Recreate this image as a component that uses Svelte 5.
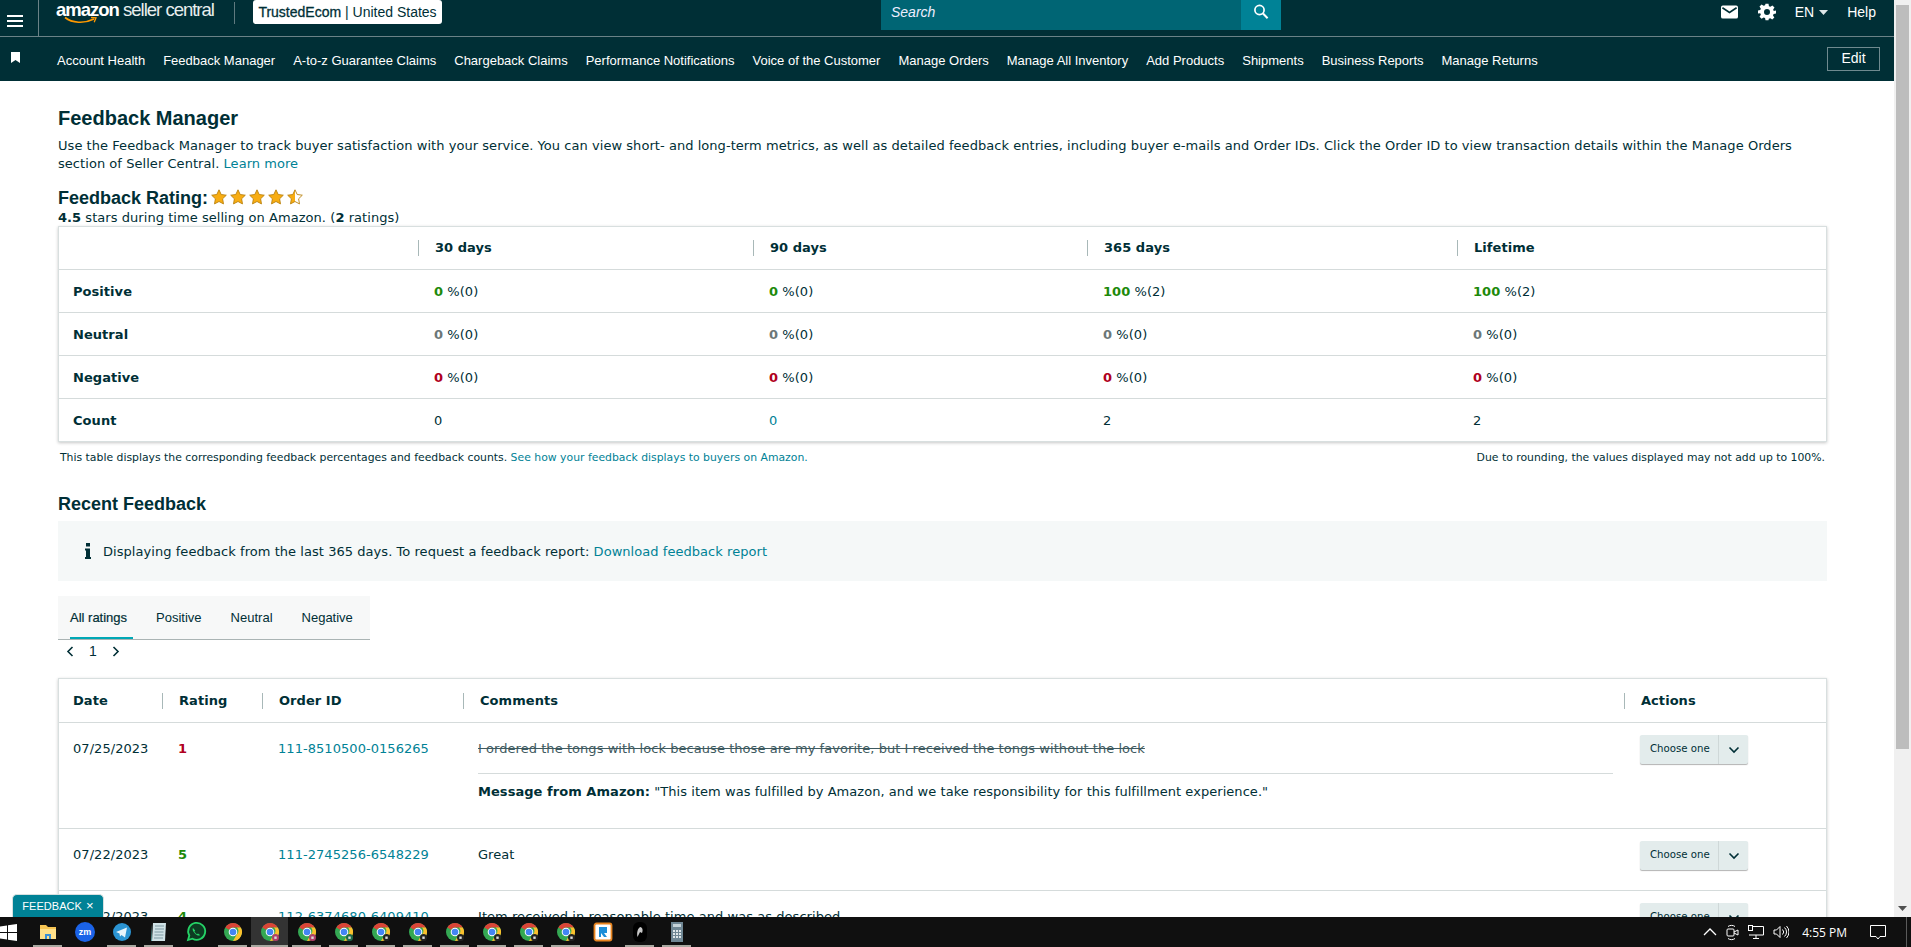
<script>
  const navItems = ['Account Health','Feedback Manager','A-to-z Guarantee Claims','Chargeback Claims','Performance Notifications','Voice of the Customer','Manage Orders','Manage All Inventory','Add Products','Shipments','Business Reports','Manage Returns'];
  const summary = [
    { label: 'Positive', cls: 'green', cells: [['0','(0)'],['0','(0)'],['100','(2)'],['100','(2)']] },
    { label: 'Neutral', cls: 'grey', cells: [['0','(0)'],['0','(0)'],['0','(0)'],['0','(0)']] },
    { label: 'Negative', cls: 'red', cells: [['0','(0)'],['0','(0)'],['0','(0)'],['0','(0)']] }
  ];
  const rows = [
    { date: '07/25/2023', rating: '1', cls: 'red', id: '111-8510500-0156265', comment: 'I ordered the tongs with lock because those are my favorite, but I received the tongs without the lock', struck: true },
    { date: '07/22/2023', rating: '5', cls: 'green', id: '111-2745256-6548229', comment: 'Great' },
    { date: '07/22/2023', rating: '4', cls: 'green', id: '112-6374680-6409410', comment: 'Item received in reasonable time and was as described' }
  ];
  const star = 'M8 .8l2.2 4.7 5.1.7-3.7 3.6.9 5.1L8 12.5l-4.5 2.4.9-5.1L.7 6.2l5.1-.7z';
  const apps = [
    { k: 'folder', on: true }, { k: 'zoom' }, { k: 'telegram', on: true }, { k: 'notepad', on: true }, { k: 'whatsapp' },
    { k: 'chrome', on: true }, { k: 'chrome', on: true, active: true, badge: '#b0406a' }, { k: 'chrome', on: true, badge: '#b0406a' },
    { k: 'chrome', on: true, badge: '#1d6b4a' }, { k: 'chrome', on: true, badge: '#222' }, { k: 'chrome', on: true, badge: '#222' },
    { k: 'chrome', on: true, badge: '#222' }, { k: 'chrome', on: true, badge: '#222' }, { k: 'chrome', on: true, badge: '#222' }, { k: 'chrome', on: true, badge: '#222' },
    { k: 'r' }, { k: 'dark', on: true }, { k: 'calc', on: true }
  ];
</script>

<div class="screen">
  <div class="upper">
    <div class="page">
      <header class="topbar">
        <button class="burger" aria-label="Menu">
          <svg width="16" height="12" viewBox="0 0 16 12"><path d="M0 1h16M0 6h16M0 11h16" stroke="#fff" stroke-width="2"/></svg>
        </button>
        <div class="logo">
          <span class="logo-text"><b>amazon</b> seller central</span>
          <svg class="smile" width="36" height="9" viewBox="0 0 36 9"><path d="M1 1.500C8 7 20 8 30 3" fill="none" stroke="#f90" stroke-width="1.600"/><path d="M27 1.500l5 .3-1.800 4.400" fill="none" stroke="#f90" stroke-width="1.300"/></svg>
        </div>
        <span class="vr"></span>
        <div class="chip"><span class="chip-strong">TrustedEcom</span> | United States</div>
        <div class="search">
          <span class="search-input">Search</span>
          <span class="search-btn">
            <svg width="18" height="18" viewBox="0 0 18 18"><circle cx="7.500" cy="7" r="4.600" fill="none" stroke="#fff" stroke-width="1.700"/><path d="M11 10.500l4.600 4.800" stroke="#fff" stroke-width="2"/></svg>
          </span>
        </div>
        <div class="top-right">
          <svg class="mail" width="17" height="14" viewBox="0 0 18 14"><rect width="18" height="14" rx="2" fill="#fff"/><path d="M1.500 2.500L9 7.500l7.500-5" fill="none" stroke="#002f36" stroke-width="1.700"/></svg>
          <svg class="gear" width="18" height="18" viewBox="0 0 24 24"><path fill="#fff" fill-rule="evenodd" d="M10 1h4l.6 3.200 1.900.8 2.700-1.800 2.800 2.800-1.800 2.700.8 1.900L24 10v4l-3.200.6-.8 1.900 1.800 2.700-2.800 2.800-2.700-1.800-1.900.8L14 23h-4l-.6-3-1.900-.8-2.700 1.800-2.800-2.800 1.800-2.700-.8-1.900L0 14v-4l3-.6.8-1.900L2 4.800 4.800 2l2.700 1.800 1.900-.8zM12 8a4 4 0 1 0 0 8 4 4 0 0 0 0-8z"/></svg>
          <span class="lang">EN</span>
          <svg class="caret" width="9" height="5" viewBox="0 0 9 5"><path d="M0 0h9L4.500 5z" fill="#dfe7e8"/></svg>
          <span class="help">Help</span>
        </div>
      </header>

      <nav class="navbar">
        <svg class="bookmark" width="9" height="11" viewBox="0 0 9 11"><path d="M0 0h9v11L4.500 8 0 11z" fill="#fff"/></svg>
        <div class="nav-items">
          {#each navItems as n}<span>{n}</span>{/each}
        </div>
        <button class="edit">Edit</button>
      </nav>

      <main class="content">
        <h1>Feedback Manager</h1>
        <p class="intro">Use the Feedback Manager to track buyer satisfaction with your service. You can view short- and long-term metrics, as well as detailed feedback entries, including buyer e-mails and Order IDs. Click the Order ID to view transaction details within the Manage Orders section of Seller Central. <a href="#a">Learn more</a></p>

        <div class="rating-title">
          <h2>Feedback Rating:</h2>
          <svg class="stars" width="96" height="18" viewBox="0 0 96 18">
            <defs><linearGradient id="half"><stop offset="50%" stop-color="#f8ad12"/><stop offset="50%" stop-color="#fff"/></linearGradient></defs>
            {#each [0,1,2,3] as i}
              <path d={star} transform="translate({i*19},1)" fill="#f8ad12" stroke="#b9810f" stroke-width=".9"/>
            {/each}
            <path d={star} transform="translate(76,1)" fill="url(#half)" stroke="#b9810f" stroke-width=".9"/>
          </svg>
        </div>
        <p class="sub"><b>4.5</b> stars during time selling on Amazon. (<b>2</b> ratings)</p>

        <div class="card summary">
          <div class="row head">
            <div></div>
            <div class="th">30 days</div><div class="th">90 days</div><div class="th">365 days</div><div class="th">Lifetime</div>
          </div>
          {#each summary as s}
            <div class="row">
              <div class="label">{s.label}</div>
              {#each s.cells as c}
                <div class="cell"><b class={s.cls}>{c[0]}</b> %{c[1]}</div>
              {/each}
            </div>
          {/each}
          <div class="row">
            <div class="label">Count</div>
            <div class="cell">0</div><div class="cell link">0</div><div class="cell">2</div><div class="cell">2</div>
          </div>
        </div>
        <div class="notes">
          <span>This table displays the corresponding feedback percentages and feedback counts. <a href="#a">See how your feedback displays to buyers on Amazon.</a></span>
          <span>Due to rounding, the values displayed may not add up to 100%.</span>
        </div>

        <h3>Recent Feedback</h3>
        <div class="info">
          <svg width="6" height="16" viewBox="0 0 6 16"><rect x="1" y="0" width="4" height="3.500" fill="#002f36"/><path d="M0 5.500h5V14h1v2H0v-2h1V7.500H0z" fill="#002f36"/></svg>
          <span>Displaying feedback from the last 365 days. To request a feedback report: <a href="#a">Download feedback report</a></span>
        </div>

        <div class="tabs">
          <span class="tab active">All ratings</span><span class="tab">Positive</span><span class="tab">Neutral</span><span class="tab">Negative</span>
        </div>
        <div class="pager">
          <svg width="8" height="11" viewBox="0 0 8 11"><path d="M6.500 1L2 5.500 6.500 10" fill="none" stroke="#002f36" stroke-width="1.600"/></svg>
          <span>1</span>
          <svg width="8" height="11" viewBox="0 0 8 11"><path d="M1.500 1L6 5.500 1.500 10" fill="none" stroke="#002f36" stroke-width="1.600"/></svg>
        </div>

        <div class="card feed">
          <div class="frow head">
            <div class="fh first">Date</div><div class="fh">Rating</div><div class="fh">Order ID</div><div class="fh">Comments</div><div class="fh">Actions</div>
          </div>
          {#each rows as r}
            <div class="frow item">
              <div class="first">{r.date}</div>
              <div><b class={r.cls}>{r.rating}</b></div>
              <div><a href="#a">{r.id}</a></div>
              <div class="comment">
                <div class:struck={r.struck}>{r.comment}</div>
                {#if r.struck}
                  <div class="msg"><b>Message from Amazon:</b> "This item was fulfilled by Amazon, and we take responsibility for this fulfillment experience."</div>
                {/if}
              </div>
              <div>
                <div class="choose">
                  <span class="choose-label">Choose one</span>
                  <span class="choose-arrow"><svg width="12" height="8" viewBox="0 0 12 8"><path d="M1.500 1.500L6 6l4.500-4.500" fill="none" stroke="#002f36" stroke-width="1.600"/></svg></span>
                </div>
              </div>
            </div>
          {/each}
        </div>
      </main>
    </div>

    <div class="scrollbar">
      <div class="thumb"></div>
      <svg class="down" width="9" height="5" viewBox="0 0 9 5"><path d="M0 0h9L4.500 5z" fill="#505050"/></svg>
    </div>

    <div class="feedback-tab">FEEDBACK <span>×</span></div>
  </div>

  <footer class="taskbar">
    <svg class="win" width="17" height="17" viewBox="0 0 17 17"><path fill="#fff" d="M0 2.400l7-1v6.600H0zM8 1.300L17 0v8H8zM0 9h7v6.600l-7-1zM8 9h9v8l-9-1.300z"/></svg>
    <div class="apps">
      {#each apps as a}
        <div class="app" class:active={a.active}>
          <svg width="22" height="22" viewBox="0 0 22 22">
            {#if a.k === 'folder'}
              <path d="M3 4h6l2 2h8v12H3z" fill="#f6c453"/><path d="M3 8h16v10H3z" fill="#ffe08a"/><path d="M8 13h6v5h-2v-3h-2v3H8z" fill="#3b8fd6"/>
            {:else if a.k === 'zoom'}
              <circle cx="11" cy="11" r="10" fill="#1b63e8"/><text x="11" y="14" text-anchor="middle" class="zm">zm</text>
            {:else if a.k === 'telegram'}
              <circle cx="11" cy="11" r="9" fill="#2b94d3"/><path d="M5 11l11-4.500-2 10-3.500-2.500-1.500 1.500-.5-3z" fill="#e8f4fb"/>
            {:else if a.k === 'notepad'}
              <path d="M5 2h13l-1 18H4z" fill="#cfe2e6"/><path d="M7 5h9M7 8h9M6.500 11h9M6.500 14h9M6 17h9" stroke="#7f9aa3" stroke-width="1"/><path d="M4 3L3 20h1z" fill="#5fa6a6"/>
            {:else if a.k === 'whatsapp'}
              <path d="M3 19l1.300-4.500a8.500 8.500 0 1 1 3.200 3.200z" fill="#0d3b22" stroke="#25d366" stroke-width="1.800"/><path d="M8 7c-1 1 0 3.500 2 5.500s4 2.700 5 1.500l-2-1.500-1 .7c-1-.5-2-1.500-2.600-2.600l.8-1z" fill="#25d366"/>
            {:else if a.k === 'chrome'}
              <circle cx="11" cy="11" r="9" fill="#34a853"/>
              <path d="M11 2a9 9 0 0 1 7.800 4.500H11a4.500 4.500 0 0 0-3.900 2.300L3.300 6.500A9 9 0 0 1 11 2z" fill="#db4437"/>
              <path d="M18.800 6.500A9 9 0 0 1 11 20l3.900-6.700a4.500 4.500 0 0 0 0-6.800z" fill="#fbc02d"/>
              <circle cx="11" cy="11" r="4.300" fill="#fff"/><circle cx="11" cy="11" r="3.300" fill="#4285f4"/>
              {#if a.badge}<circle cx="16.500" cy="16.500" r="3.500" fill={a.badge}/><rect x="15.300" y="15.500" width="2.400" height="2.400" fill="#ddd"/>{/if}
            {:else if a.k === 'r'}
              <rect x="2.500" y="2.500" width="17" height="17" rx="2" fill="#fff" stroke="#e8841f" stroke-width="1.800"/><path d="M7 6h8v6h-3l3 4h-3l-3-4v4H7z" fill="#1d8ed8"/>
            {:else if a.k === 'dark'}
              <rect x="4" y="1" width="14" height="20" rx="6" fill="#000"/><path d="M8.500 16c-1-4 0-9 3-10 2.500 1 2.500 4 1.500 6l-2-1z" fill="#c8c8c8"/>
            {:else if a.k === 'calc'}
              <rect x="5" y="1" width="12" height="20" fill="#6f8794"/><rect x="7" y="3" width="8" height="3" fill="#c5d3d9"/><path d="M7 9h2v2H7zM10 9h2v2h-2zM13 9h2v2h-2zM7 12h2v2H7zM10 12h2v2h-2zM13 12h2v2h-2zM7 15h2v2H7zM10 15h2v2h-2zM13 15h2v2h-2z" fill="#dfe7ea"/>
            {/if}
          </svg>
          {#if a.on}<span class="bar"></span>{/if}
        </div>
      {/each}
    </div>
    <div class="tray">
      <svg width="14" height="8" viewBox="0 0 14 8"><path d="M1 7l6-6 6 6" fill="none" stroke="#fff" stroke-width="1.300"/></svg>
      <svg width="13" height="17" viewBox="0 0 13 17"><rect x="1" y="5" width="7" height="7" rx="1" fill="none" stroke="#fff"/><path d="M8 8l4-2v5l-4-2M2 2.500c2-1.500 5-1.500 7 0M2 14.500c2 1.500 5 1.500 7 0" fill="none" stroke="#fff"/></svg>
      <svg width="16" height="14" viewBox="0 0 16 14"><path d="M3.500 1.500H15.500V10H1M8 10v3M5 13.500h6" fill="none" stroke="#fff"/><rect x=".5" y=".5" width="4" height="5" fill="#111" stroke="#fff"/></svg>
      <svg width="16" height="14" viewBox="0 0 16 14"><path d="M1 5h2.500L7 1.500v11L3.500 9H1zM9.500 4.500a3.500 3.500 0 0 1 0 5M11.500 2.500a6 6 0 0 1 0 9M13.500 1a8.500 8.500 0 0 1 0 12" fill="none" stroke="#fff"/></svg>
      <span class="clock">4:55 PM</span>
      <svg class="notif" width="16" height="15" viewBox="0 0 16 15"><path d="M.5.500h15v11H10l-2 2.500-2-2.500H.5z" fill="none" stroke="#fff"/></svg>
    </div>
    <span class="edge"></span>
  </footer>
</div>

<style>
  :global(body) { margin: 0; overflow: hidden; background: #fff; }
  .screen { width: 1911px; height: 947px; display: flex; flex-direction: column; overflow: hidden; font-family: "DejaVu Sans", Verdana, sans-serif; color: #002f36; font-size: 13px; letter-spacing: .05px; }
  .upper { position: relative; flex: 1; min-height: 0; display: flex; overflow: hidden; }
  .page { flex: 1; min-width: 0; overflow: hidden; }
  a { color: #008296; text-decoration: none; }
  b.green { color: #1d8a0a; } b.grey { color: #6c7778; } b.red { color: #b00020; }

  .topbar { height: 36px; background: #002f36; border-bottom: 1px solid #6a8287; display: flex; align-items: flex-start; font-family: "Liberation Sans", Arial, sans-serif; color: #fff; letter-spacing: 0; }
  .burger { width: 39px; height: 36px; box-sizing: border-box; padding: 6px 0 0 7px; background: none; border: 0; border-right: 1px solid #6a8287; text-align: left; flex: none; }
  .burger svg { display: block; }
  .logo { position: relative; width: 178px; margin-left: 17px; flex: none; height: 30px; }
  .logo-text { display: block; font-size: 18.5px; letter-spacing: -1px; line-height: 20px; font-weight: 400; color: #e8eeee; white-space: nowrap; }
  .logo-text b { color: #fff; font-weight: 700; }
  .smile { position: absolute; left: 8px; top: 16px; }
  .vr { width: 1px; height: 22px; background: #5f7a7f; flex: none; margin-top: 2px; }
  .chip { margin-left: 18px; flex: none; width: 189px; height: 24px; box-sizing: border-box; background: #fff; color: #002f36; border-radius: 3px; font-size: 14px; line-height: 24px; text-align: center; }
  .chip-strong { font-weight: 500; -webkit-text-stroke: .3px #002f36; }
  .search { margin-left: 439px; width: 400px; height: 30px; display: flex; flex: none; }
  .search-input { flex: 1; background: #006574; color: #eef; font-style: italic; font-size: 14px; line-height: 24px; padding-left: 10px; }
  .search-btn { width: 40px; background: #008296; display: flex; align-items: center; justify-content: center; padding-bottom: 6px; box-sizing: border-box; }
  .top-right { margin-left: auto; padding-right: 18px; height: 24px; display: flex; align-items: center; font-size: 14px; }
  .mail { margin-right: 20px; }
  .gear { margin-right: 19px; }
  .lang { margin-right: 5px; }
  .caret { margin-right: 19px; }

  .navbar { height: 44px; background: #002f36; display: flex; align-items: center; font-family: "Liberation Sans", Arial, sans-serif; color: #fff; position: relative; letter-spacing: 0; }
  .bookmark { margin-left: 11px; flex: none; margin-top: -4px; }
  .nav-items { display: flex; gap: 18px; margin-left: 37px; margin-top: 2px; font-size: 13px; white-space: nowrap; }
  .edit { margin-left: auto; margin-right: 14px; width: 53px; height: 24px; background: transparent; color: #fff; border: 1px solid #6f8a8f; font: 14px "Liberation Sans", Arial, sans-serif; padding: 0 0 3px; }

  .content { padding: 26px 67px 0 58px; }
  h1 { margin: 0; font: 700 20px/22px "Liberation Sans", Arial, sans-serif; color: #002f36; letter-spacing: 0; }
  .intro { margin: 8px 0 0; line-height: 18px; }
  .rating-title { display: flex; align-items: center; gap: 3px; margin-top: 14px; height: 22px; }
  h2 { margin: 0; font: 700 18px/22px "Liberation Sans", Arial, sans-serif; letter-spacing: 0; }
  .stars { margin-top: -2px; }
  .sub { margin: 1px 0 0; line-height: 15px; }
  .card { background: #fff; border: 1px solid #d8dfdf; box-shadow: 0 1px 3px rgba(0,0,0,.22); }
  .summary { margin-top: 1px; }
  .row { display: grid; grid-template-columns: 359px 335px 334px 370px 1fr; height: 42px; align-items: center; border-top: 1px solid #d5dbdb; }
  .row.head { border-top: 0; }
  .th { font-weight: 700; padding-left: 16px; border-left: 1px solid #a8b8b8; line-height: 16px; }
  .label { font-weight: 700; padding-left: 14px; }
  .cell { padding-left: 16px; color: #002f36; }
  .cell b { font-weight: 700; }
  .cell.link { color: #008296; }
  .notes { display: flex; justify-content: space-between; padding: 9px 2px 0; font-size: 10.85px; line-height: 14px; letter-spacing: 0; }
  h3 { margin: 28px 0 0; font: 700 18px/22px "Liberation Sans", Arial, sans-serif; letter-spacing: 0; }
  .info { margin-top: 6px; height: 60px; background: #f5f8f8; display: flex; align-items: center; gap: 12px; padding-left: 27px; }
  .tabs { margin-top: 15px; width: 312px; height: 43px; background: #f7f8f8; border-bottom: 1px solid #aab4b4; display: flex; font: 13px/43px "Liberation Sans", Arial, sans-serif; letter-spacing: 0; }
  .tab { position: relative; padding: 0 12px; margin-right: 5px; }
  .tab.active { -webkit-text-stroke: .2px #002f36; }
  .tab.active::after { content: ""; position: absolute; left: 12px; right: 6px; bottom: 0; height: 2px; background: #00a8b5; }
  .pager { display: flex; align-items: center; gap: 15px; height: 22px; padding-left: 8px; font: 14px "Liberation Sans", Arial, sans-serif; letter-spacing: 0; }
  .feed { margin-top: 16px; }
  .frow { display: grid; grid-template-columns: 103px 100px 201px 1161px 1fr; }
  .frow.head { height: 43px; align-items: center; }
  .fh { font-weight: 700; padding-left: 16px; border-left: 1px solid #a8b8b8; line-height: 16px; }
  .fh.first { border-left: 0; padding-left: 14px; }
  .item { border-top: 1px solid #d5dbdb; padding: 16px 0 20px; }
  .item > div { padding-left: 16px; line-height: 20px; }
  .item > div.first { padding-left: 14px; }
  .item .comment { padding-left: 15px; padding-right: 11px; }
  .struck { text-decoration: line-through; color: #3e5a60; padding-bottom: 14px; border-bottom: 1px solid #d5dbdb; }
  .msg { margin-top: 8px; padding-bottom: 6px; }
  .choose { display: flex; width: 108px; height: 29px; margin-top: -4px; background: #e3ecec; border-radius: 2px; box-shadow: 0 1px 1px rgba(0,0,0,.3); font-size: 10.2px; line-height: 28px; letter-spacing: 0; }
  .choose-label { width: 79px; box-sizing: border-box; padding-left: 10px; border-right: 1px solid #cfd8d8; white-space: nowrap; }
  .choose-arrow { flex: 1; display: flex; align-items: center; justify-content: center; }

  .scrollbar { position: relative; width: 17px; flex: none; background: #f0f0f0; }
  .thumb { position: absolute; left: 2px; right: 2px; top: 5px; height: 744px; background: #bdbdbd; }
  .down { position: absolute; left: 4px; bottom: 6px; }
  .feedback-tab { position: absolute; left: 12px; bottom: 0; height: 23px; width: 92px; box-sizing: border-box; border-radius: 5px 5px 0 0; background: #008296; border: 1px solid #d7e0e0; border-bottom: 0; color: #fff; font: 11px/22px "Liberation Sans", Arial, sans-serif; text-align: center; }
  .feedback-tab span { font-size: 13px; margin-left: 1px; }

  .taskbar { position: relative; height: 30px; flex: none; background: #101010; display: flex; align-items: center; color: #fff; }
  .win { flex: none; }
  .apps { display: flex; margin-left: 12px; height: 30px; }
  .app { position: relative; width: 37px; height: 30px; display: flex; align-items: center; justify-content: center; }
  .app.active { background: #333; }
  .bar { position: absolute; left: 4px; right: 4px; bottom: 0; height: 2px; background: #a8a8a0; }
  .app.active .bar { left: 0; right: 0; }
  .zm { font: 700 9px "Liberation Sans", Arial, sans-serif; fill: #fff; }
  .tray { margin-left: auto; display: flex; align-items: center; padding-right: 25px; gap: 9px; }
  .clock { font: 12px "Open Sans", "Noto Sans", sans-serif; margin: 0 14px 0 4px; letter-spacing: 0; white-space: nowrap; }
  .edge { position: absolute; right: 4px; top: 0; bottom: 0; width: 1px; background: #5a5a5a; }
</style>
